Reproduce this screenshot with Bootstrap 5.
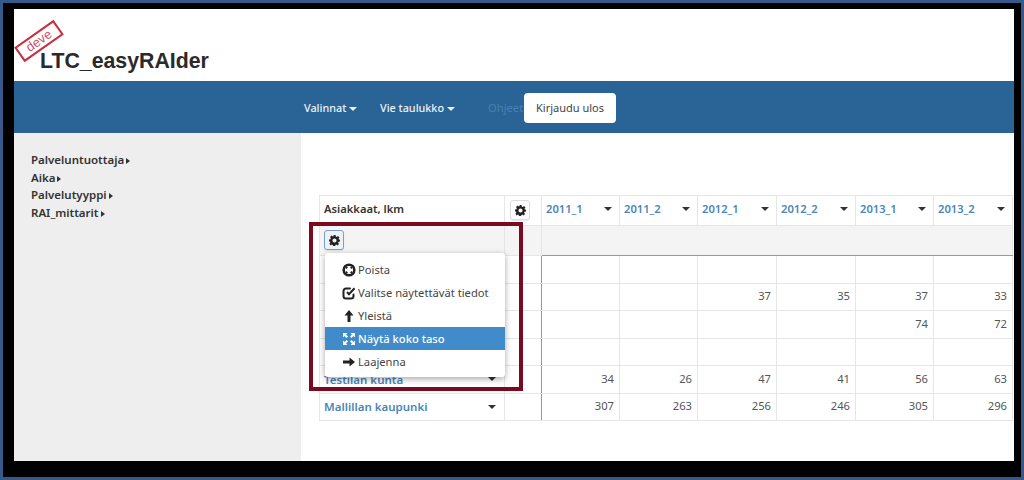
<!DOCTYPE html>
<html lang="fi">
<head>
    <meta charset="UTF-8">
    <title>LTC_easyRAIder</title>
    <link href="https://cdn.jsdelivr.net/npm/bootstrap@5.3.2/dist/css/bootstrap.min.css" rel="stylesheet">
    <style>
        html, body { height: 480px; overflow: hidden; }
        body {
            background: #000;
            border: 3px solid #37588a;
            padding: 6px 7px 16px 11px;
            font-family: "Noto Sans", "Open Sans", sans-serif;
            font-size: 11.2px;
            color: #444;
        }
        .page-sheet { position: relative; height: 452px; background: #fff; overflow: hidden; display: flex; flex-direction: column; }
        .brand-head { height: 72px; flex: none; padding: 39px 0 0 26px; }
        .brand-head h1 { font-family: "Liberation Sans", sans-serif; font-weight: 700; font-size: 21.3px; line-height: 26px; margin: 0; color: #2a2a2a; }
        .deve-stamp {
            position: absolute; left: 1px; top: 23px; width: 48px; height: 18px;
            border: 2px solid #c8303f; color: #c8506a; font-family: "Liberation Sans", sans-serif;
            font-size: 13px; line-height: 14px; text-align: center; transform: rotate(-35deg); background: #fff;
        }
        .top-bar { height: 52px; flex: none; background: #2a6496; display: flex; align-items: center; padding: 2px 0 0 290px; color: #fff; font-size: 10.8px; font-weight: 500; }
        .top-bar .bar-link { color: #eaf2f8; text-decoration: none; white-space: nowrap; }
        .top-bar .nav-first { width: 76px; }
        .top-bar .nav-second { width: 108px; }
        .top-bar .bar-help { color: #4480b4; font-size: 11.2px; font-weight: 400; width: 36px; }
        .top-bar .btn-logout { background: #fff; color: #444; font-size: 11px; font-weight: 400; border: 0; border-radius: 4px; width: 92px; height: 30px; padding: 0; }
        .caret-down { display: inline-block; width: 0; height: 0; margin-left: 3px; vertical-align: middle; border-top: 4px solid currentColor; border-left: 4px solid transparent; border-right: 4px solid transparent; }
        .caret-right { display: inline-block; width: 0; height: 0; margin-left: 2px; border-left: 4px solid #333; border-top: 3px solid transparent; border-bottom: 3px solid transparent; }
        .main-row { flex: 1; display: flex; min-height: 0; }
        .side-col { width: 287px; flex: none; background: #eee; padding: 18px 17px; font-size: 11.5px; font-weight: 600; line-height: 17.7px; color: #333; }
        .table-col { flex: 1; padding: 62px 0 0 18px; overflow: hidden; }
        .pivot { table-layout: fixed; width: 693px; border-collapse: collapse; }
        .pivot td, .pivot th { border: 1px solid #e6e6e6; padding: 0 4px; font-weight: 400; vertical-align: middle; }
        .pivot .head-row { height: 30px; }
        .pivot .head-row th { padding-bottom: 2px; }
        .pivot .grey-row td { height: 30px; background: #f4f4f4; }
        .pivot .grey-row td.grey-end { border-bottom: 1px solid #999; }
        .pivot .data-row td { height: 27.5px; text-align: right; padding-right: 5px; color: #555; }
        .pivot .data-row td.name-cell { text-align: left; }
        .pivot .data-row td.gear-cell { border-right: 1px solid #999; }
        .pivot .head-row th.gear-cell { padding: 0 0 0 5px; }
        .pivot .head-row th.year-cell { color: #4a86b8; font-weight: 600; }
        .pivot .head-row th.row-title { font-weight: 600; color: #333; }
        .cell-flex { display: flex; justify-content: space-between; align-items: center; }
        .caret-dark { color: #333; margin-right: 3px; }
        .name-link { color: #4a86b8; font-weight: 600; font-size: 11.5px; }
        .gear-btn { width: 20px; height: 20px; padding: 0; border: 1px solid #ddd; border-radius: 3px; background: #fff; box-shadow: 0 1px 1px rgba(0,0,0,.08); display: inline-flex; align-items: center; justify-content: center; color: #222; }
        .gear-btn.is-open { border-color: #7b9fc9; background: #eef1f5; }
        .gear-btn svg { width: 11px; height: 11px; }
        .callout-box { position: absolute; left: 295px; top: 213px; width: 214px; height: 169px; border: 4px solid #7b0a20; pointer-events: none; }
        .pop-menu { position: absolute; left: 311px; top: 244px; width: 180px; height: 124px; background: #fff; border-radius: 3px; box-shadow: 0 2px 6px rgba(0,0,0,.35); padding-top: 5px; }
        .pop-item { height: 23px; display: flex; align-items: center; padding: 1px 0 0 17px; color: #444; gap: 2px; white-space: nowrap; }
        .pop-item svg { width: 14px; height: 14px; flex: none; color: #222; }
        .pop-item.is-active { background: #428bca; color: #fff; font-weight: 500; }
        .pop-item.is-active svg { color: #fff; }
    </style>
</head>
<body>
    <div class="page-sheet">
        <div class="deve-stamp">deve</div>
        <div class="brand-head"><h1>LTC_easyRAIder</h1></div>
        <div class="top-bar">
            <a class="bar-link nav-first" href="#">Valinnat<span class="caret-down"></span></a>
            <a class="bar-link nav-second" href="#">Vie taulukko<span class="caret-down"></span></a>
            <span class="bar-help">Ohjeet</span>
            <button class="btn btn-logout" type="button">Kirjaudu ulos</button>
        </div>
        <div class="main-row">
            <div class="side-col">
                <div>Palveluntuottaja<span class="caret-right"></span></div>
                <div>Aika<span class="caret-right"></span></div>
                <div>Palvelutyyppi<span class="caret-right"></span></div>
                <div>RAI_mittarit<span class="caret-right"></span></div>
            </div>
            <div class="table-col">
                <table class="pivot" id="pivot"></table>
            </div>
        </div>
        <div class="callout-box"></div>
        <div class="pop-menu">
            <div class="pop-item"><svg viewBox="0 0 14 14"><circle cx="7" cy="7" r="5.3" fill="#fff" stroke="currentColor" stroke-width="2.6"/><path stroke="currentColor" stroke-width="2" d="m4 4 1.200 1.200M10 4 8.800 5.200M4 10l1.200-1.200M10 10 8.800 8.800"/></svg>Poista</div>
            <div class="pop-item"><svg viewBox="0 0 14 14"><path fill="none" stroke="currentColor" stroke-width="2" stroke-linecap="round" d="M11.500 8.500v1.500a2.500 2.500 0 0 1-2.500 2.500H4A2.500 2.500 0 0 1 1.500 10V5A2.500 2.500 0 0 1 4 2.500h4"/><path fill="none" stroke="currentColor" stroke-width="2" d="m5 6 2 2.300 5.500-6"/></svg>Valitse näytettävät tiedot</div>
            <div class="pop-item"><svg viewBox="0 0 14 14"><path fill="currentColor" d="M7 1 2.500 6.500h3V13h3V6.500h3z"/></svg>Yleistä</div>
            <div class="pop-item is-active"><svg viewBox="0 0 14 14"><path fill="currentColor" d="M1 1h4.500L4 2.500 6 4.500 4.500 6l-2-2L1 5.500zM13 1v4.500L11.500 4l-2 2L8 4.500l2-2L8.500 1zM1 13V8.500L2.500 10l2-2L6 9.500l-2 2L5.500 13zM13 13H8.500l1.500-1.500-2-2L9.500 8l2 2L13 8.500z"/></svg>Näytä koko taso</div>
            <div class="pop-item"><svg viewBox="0 0 14 14"><path fill="currentColor" d="M13 7 7.500 2.500v3H1v3h6.500v3z"/></svg>Laajenna</div>
        </div>
    </div>

    <script>
        const gear = '<svg viewBox="0 0 16 16"><path fill="currentColor" fill-rule="evenodd" d="M6.500 0h3l.4 2.200 1.300.6L13.100 1.500l2.100 2.200-1.300 1.800.6 1.300L16 6.500v3l-2.100.4-.6 1.300 1.300 1.900-2.100 2.100-1.900-1.300-1.300.6-.4 2.100h-3l-.4-2.100-1.300-.6-1.900 1.300L.7 12.600 2 10.700l-.6-1.300L0 9.500v-3l2.100-.4.6-1.300L1.500 3 3.600.9l1.900 1.300 1.300-.6zM8 5a3 3 0 1 0 0 6 3 3 0 0 0 0-6z"/></svg>';
        const years = ["2011_1", "2011_2", "2012_1", "2012_2", "2013_1", "2013_2"];
        const rows = [
            ["", ["", "", "", "", "", ""]],
            ["", ["", "", "37", "35", "37", "33"]],
            ["", ["", "", "", "", "74", "72"]],
            ["", ["", "", "", "", "", ""]],
            ["Testilan kunta", ["34", "26", "47", "41", "56", "63"]],
            ["Mallillan kaupunki", ["307", "263", "256", "246", "305", "296"]]
        ];
        const widths = [185, 37, 78, 78, 79, 79, 78, 79];

        let html = "<colgroup>" + widths.map(w => `<col style="width:${w}px">`).join("") + "</colgroup>";
        html += `<tr class="head-row"><th class="row-title">Asiakkaat, lkm</th><th class="gear-cell"><button class="gear-btn">${gear}</button></th>`;
        years.forEach(y => {
            html += `<th class="year-cell"><div class="cell-flex">${y}<span class="caret-down caret-dark"></span></div></th>`;
        });
        html += "</tr>";
        html += `<tr class="grey-row"><td><button class="gear-btn is-open">${gear}</button></td><td></td><td class="grey-end" colspan="6"></td></tr>`;
        rows.forEach(r => {
            const name = r[0] ? `<div class="cell-flex"><span class="name-link">${r[0]}</span><span class="caret-down caret-dark"></span></div>` : "";
            html += `<tr class="data-row"><td class="name-cell">${name}</td><td class="gear-cell"></td>`;
            r[1].forEach(v => { html += `<td>${v}</td>`; });
            html += "</tr>";
        });
        document.getElementById("pivot").innerHTML = html;
    </script>
    <script src="https://cdn.jsdelivr.net/npm/bootstrap@5.3.2/dist/js/bootstrap.bundle.min.js"></script>
</body>
</html>
